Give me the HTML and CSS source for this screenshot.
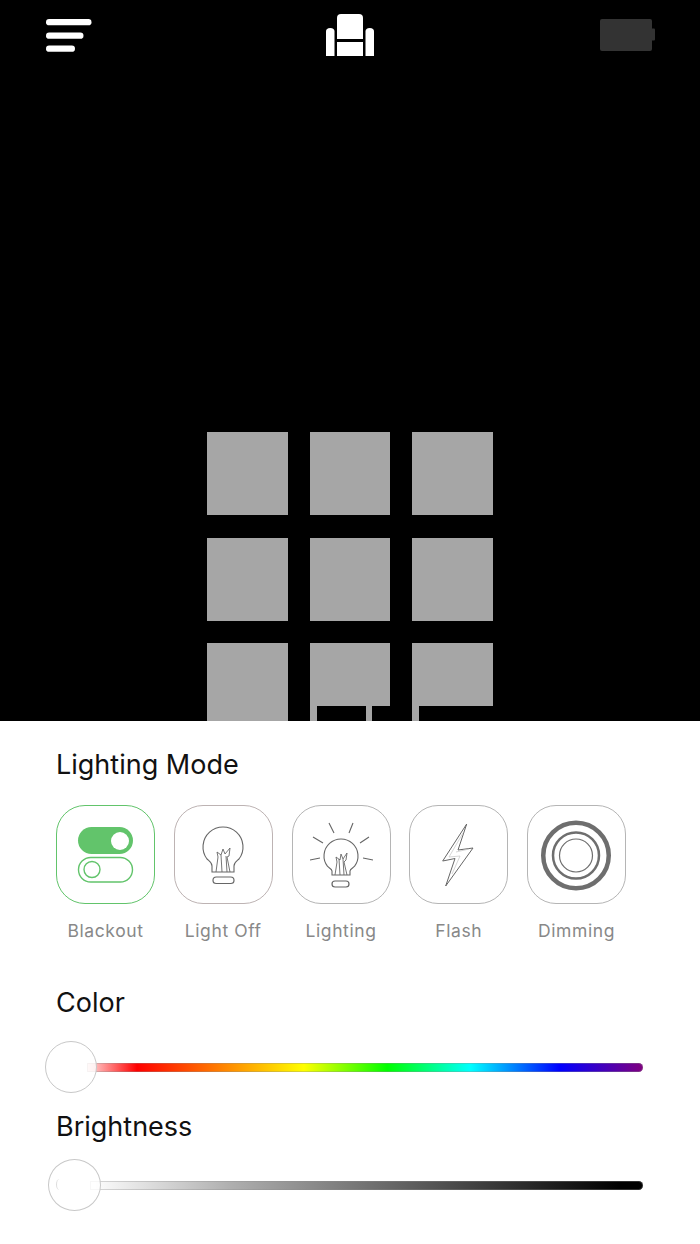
FILE: index.html
```html
<!DOCTYPE html>
<html lang="en">
<head>
  <meta charset="UTF-8">
  <meta name="viewport" content="width=device-width, initial-scale=1.0">
  <title>Lighting Mode</title>
  <link rel="stylesheet" href="styles.css">
</head>
<body>
  <div class="stage">
    <div class="topbar">
      <svg class="menu-icon" width="46" height="33" viewBox="0 0 46 33">
        <rect x="0" y="0" width="45.500" height="6.300" rx="3.150" fill="#fff"/>
        <rect x="0" y="13.500" width="37.500" height="6.300" rx="3.150" fill="#fff"/>
        <rect x="0" y="26.500" width="29" height="6.300" rx="3.150" fill="#fff"/>
      </svg>
      <svg class="seat-icon" width="48" height="42" viewBox="0 0 48 42">
        <path d="M11 4a4 4 0 0 1 4-4h18a4 4 0 0 1 4 4v21H11z" fill="#fff"/>
        <rect x="11" y="28" width="26" height="14" fill="#fff"/>
        <path d="M0 17.500a4.250 3.500 0 0 1 8.500 0V42H0z" fill="#fff"/>
        <path d="M39.500 17.500a4.250 3.500 0 0 1 8.500 0V42h-8.500z" fill="#fff"/>
      </svg>
      <svg class="battery-icon" width="55" height="32" viewBox="0 0 55 32">
        <rect x="0" y="0" width="52" height="32" rx="2" fill="#333"/>
        <rect x="51" y="9.500" width="4" height="12" rx="1" fill="#333"/>
      </svg>
    </div>

    <div class="seats">
      <div class="seat"></div>
      <div class="seat"></div>
      <div class="seat"></div>
      <div class="seat"></div>
      <div class="seat"></div>
      <div class="seat"></div>
      <div class="seat seat-tall"></div>
      <div class="seat seat-tall seat-middle"></div>
      <div class="seat seat-tall seat-right"></div>
    </div>
  </div>

  <div class="panel">
    <h2 class="title">Lighting Mode</h2>
    <div class="modes">
      <div class="mode">
        <div class="tile tile-active">
          <svg width="99" height="99" viewBox="0 0 99 99">
            <rect x="22" y="22" width="55" height="27" rx="13.500" fill="#62c46b"/>
            <circle cx="64" cy="36" r="9" fill="#fff"/>
            <rect x="22.500" y="52.500" width="54" height="24.500" rx="12.250" fill="none" stroke="#62c46b" stroke-width="1.400"/>
            <circle cx="36" cy="64.500" r="8" fill="none" stroke="#62c46b" stroke-width="1.400"/>
          </svg>
        </div>
        <span class="mode-label">Blackout</span>
      </div>
      <div class="mode">
        <div class="tile tile-off">
          <svg width="99" height="99" viewBox="0 0 99 99">
            <path d="M38 67v-6c0-4-3-5-5-7a20 20 0 1 1 32 0c-2 2-5 3-5 7v6z" fill="none" stroke="#666" stroke-width="1.100"/>
            <path d="M42 67l2-15-1-5 4 3 2-6 2 5 5-6-1 8-2 1 3 15M47 50l1 17M52 51l1 16" fill="none" stroke="#666" stroke-width="0.900"/>
            <rect x="39" y="72" width="21" height="6.500" rx="3.250" fill="none" stroke="#666" stroke-width="1.200"/>
          </svg>
        </div>
        <span class="mode-label">Light Off</span>
      </div>
      <div class="mode">
        <div class="tile">
          <svg width="99" height="99" viewBox="0 0 99 99">
            <path d="M40 70v-4c0-2-3-3-4.600-4.800a17 17 0 1 1 27.200 0c-1.600 1.800-4.600 2.800-4.600 4.800v4z" fill="none" stroke="#666" stroke-width="1.100"/>
            <path d="M43 70l2-13-1-5 4 3 1-6 2 5 4-6-1 7-2 2 3 13M47 54l1 16M51 54l1 16" fill="none" stroke="#666" stroke-width="0.900"/>
            <rect x="40" y="76" width="17" height="6" rx="3" fill="none" stroke="#666" stroke-width="1.200"/>
            <path d="M37 18l5 10M61 18l-4 10M21 32l10 6M77 32l-9 6M18 55l10-2M81 55l-10-2" fill="none" stroke="#666" stroke-width="1.100"/>
          </svg>
        </div>
        <span class="mode-label">Lighting</span>
      </div>
      <div class="mode">
        <div class="tile">
          <svg width="99" height="99" viewBox="0 0 99 99">
            <path d="M57.700 19L33.700 56 46 53.500 36.700 81 64 43 49 45z" fill="none" stroke="#666" stroke-width="1"/>
            <path d="M54 28L40 52l11-1-8 18M60 44L47 47" fill="none" stroke="#c4c4c4" stroke-width="0.700"/>
          </svg>
        </div>
        <span class="mode-label">Flash</span>
      </div>
      <div class="mode">
        <div class="tile">
          <svg width="99" height="99" viewBox="0 0 99 99">
            <circle cx="49" cy="50.500" r="32.750" fill="none" stroke="#6e6e6e" stroke-width="4.500"/>
            <circle cx="49" cy="50.500" r="23" fill="none" stroke="#6e6e6e" stroke-width="2.500"/>
            <circle cx="49" cy="50.500" r="16.500" fill="none" stroke="#6e6e6e" stroke-width="1.200"/>
          </svg>
        </div>
        <span class="mode-label">Dimming</span>
      </div>
    </div>

    <h2 class="title title-color">Color</h2>
    <div class="slider slider-color">
      <div class="track track-color"></div>
      <div class="thumb"></div>
    </div>

    <h2 class="title title-brightness">Brightness</h2>
    <div class="slider slider-brightness">
      <div class="track track-brightness"></div>
      <div class="thumb thumb-large"></div>
    </div>
  </div>
</body>
</html>
```

FILE: styles.css
```css
* {
  box-sizing: border-box;
}

body {
  margin: 0;
  width: 700px;
  height: 1244px;
  overflow: hidden;
  background-color: #fff;
  font-family: Inter, "Liberation Sans", sans-serif;
}

.stage {
  height: 721px;
  background-color: #000;
  overflow: hidden;
}

.topbar {
  display: grid;
  grid-template-columns: 1fr auto 1fr;
  align-items: start;
  height: 432px;
  padding: 14px 45px 0;
}

.topbar svg {
  display: block;
}

.menu-icon {
  margin: 5px 0 0 1px;
}

.battery-icon {
  margin-top: 5px;
  justify-self: end;
}

.seats {
  display: grid;
  grid-template-columns: 81px 80px 81px;
  grid-auto-rows: 83px;
  column-gap: 22px;
  row-gap: 22.500px;
  justify-content: center;
}

.seat {
  position: relative;
  background-color: #a6a6a6;
}

.seat-tall {
  height: 100px;
}

.seat-middle::before,
.seat-middle::after,
.seat-right::before {
  content: "";
  position: absolute;
  top: 63px;
  bottom: 0;
  background-color: #000;
}

.seat-middle::before {
  left: 6.500px;
  width: 49px;
}

.seat-middle::after {
  left: 62.300px;
  right: 0;
}

.seat-right::before {
  left: 7px;
  right: 0;
}

.panel {
  padding: 28px 0 0 57px;
}

.title {
  margin: 0 0 0 -1px;
  font-size: 27px;
  font-weight: 400;
  line-height: 32px;
  color: #111;
}

.modes {
  display: grid;
  grid-template-columns: repeat(5, 99px);
  column-gap: 18.750px;
  margin: 24px 0 0 -1px;
}

.mode {
  display: flex;
  flex-direction: column;
  align-items: center;
}

.tile {
  width: 99px;
  height: 99px;
  border: 1px solid #b5b5b5;
  border-radius: 29px;
}

.tile svg {
  display: block;
  margin: -1px;
}

.tile-active {
  border-color: #62c46b;
}

.tile-off {
  border-color: #bdb3b3;
}

.mode-label {
  margin-top: 16px;
  font-size: 17.500px;
  line-height: 22px;
  letter-spacing: 0.6px;
  color: #888;
}

.title-color {
  margin-top: 45px;
}

.title-brightness {
  margin-top: 18px;
}

.slider {
  position: relative;
  height: 52px;
}

.slider-color {
  margin-top: 22px;
}

.slider-brightness {
  margin-top: 16px;
}

.track {
  position: absolute;
  right: 57px;
  height: 9px;
  border-radius: 0 5px 5px 0;
  box-shadow: inset 0 0 0 1px rgba(140, 140, 140, 0.35);
}

.track-color {
  left: 30px;
  top: 22px;
  background: linear-gradient(to right, #ffe0e0 0%, #f00 9%, #ff0 39%, #0f0 54%, #0ff 69%, #00f 85%, #800080 100%);
}

.track-brightness {
  left: 33px;
  top: 22px;
  background: linear-gradient(to right, #fff 0%, #b0b0b0 25%, #000 96%);
}

.thumb {
  position: absolute;
  left: -12px;
  top: 0;
  width: 52px;
  height: 52px;
  border: 1.500px solid #c8c8c8;
  border-radius: 50%;
  background-color: rgba(255, 255, 255, 0.8);
}

.thumb-large {
  left: -9px;
  width: 53px;
}

.thumb-large::before {
  content: "";
  position: absolute;
  left: 7px;
  top: 19px;
  width: 6px;
  height: 11px;
  border-left: 1px solid #ddd;
  border-radius: 50%;
}
```
